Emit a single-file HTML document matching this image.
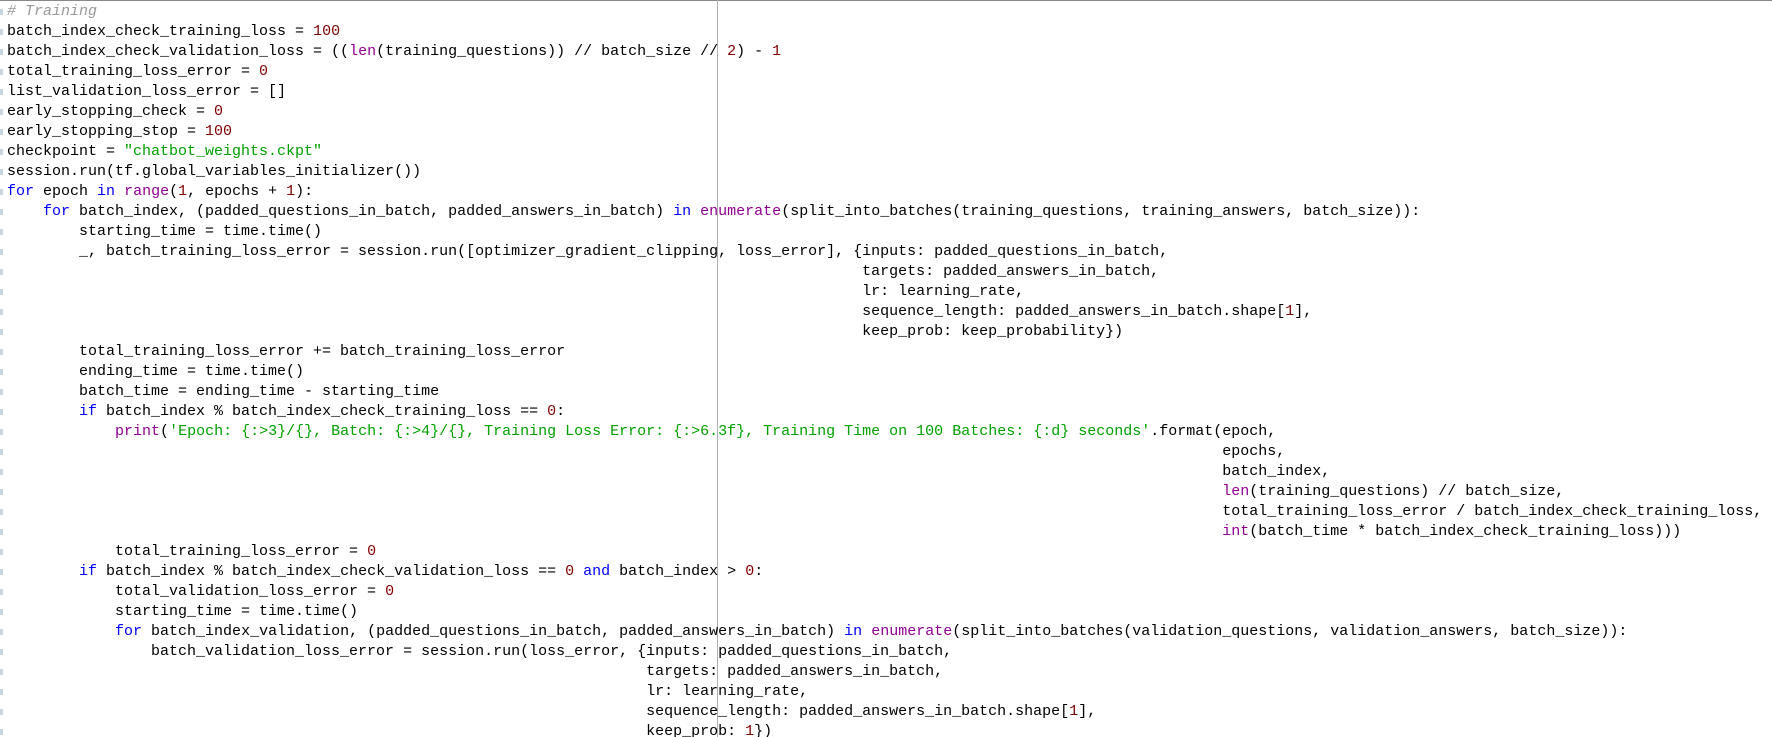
<!DOCTYPE html>
<html><head><meta charset="utf-8"><style>
html,body{margin:0;padding:0;background:#fff;width:1772px;height:737px;overflow:hidden;position:relative}
.top{position:absolute;left:0;top:0;width:1772px;height:1px;background:#8a8a8a}
.vl{position:absolute;left:717px;top:0;width:1px;height:737px;background:#b0b0b0}
.gut{position:absolute;left:0;top:1px;width:3px;height:736px;background:repeating-linear-gradient(#fff 0 8px,#c8d4e0 8px 14px,#fff 14px 20px)}
pre{position:absolute;left:7px;top:2px;margin:0;font-family:"Liberation Mono",monospace;font-size:15px;line-height:20px;color:#000;white-space:pre}
.c{color:#999;font-style:italic}.k{color:#0000ff}.b{color:#900090}.n{color:#800000}.s{color:#00a000}
</style></head><body>
<div class="top"></div><div class="gut"></div><div class="vl"></div>
<pre><span class="c"># Training</span>
batch_index_check_training_loss = <span class="n">100</span>
batch_index_check_validation_loss = ((<span class="b">len</span>(training_questions)) // batch_size // <span class="n">2</span>) - <span class="n">1</span>
total_training_loss_error = <span class="n">0</span>
list_validation_loss_error = []
early_stopping_check = <span class="n">0</span>
early_stopping_stop = <span class="n">100</span>
checkpoint = <span class="s">"chatbot_weights.ckpt"</span>
session.run(tf.global_variables_initializer())
<span class="k">for</span> epoch <span class="k">in</span> <span class="b">range</span>(<span class="n">1</span>, epochs + <span class="n">1</span>):
    <span class="k">for</span> batch_index, (padded_questions_in_batch, padded_answers_in_batch) <span class="k">in</span> <span class="b">enumerate</span>(split_into_batches(training_questions, training_answers, batch_size)):
        starting_time = time.time()
        _, batch_training_loss_error = session.run([optimizer_gradient_clipping, loss_error], {inputs: padded_questions_in_batch,
                                                                                               targets: padded_answers_in_batch,
                                                                                               lr: learning_rate,
                                                                                               sequence_length: padded_answers_in_batch.shape[<span class="n">1</span>],
                                                                                               keep_prob: keep_probability})
        total_training_loss_error += batch_training_loss_error
        ending_time = time.time()
        batch_time = ending_time - starting_time
        <span class="k">if</span> batch_index % batch_index_check_training_loss == <span class="n">0</span>:
            <span class="b">print</span>(<span class="s">'Epoch: {:&gt;3}/{}, Batch: {:&gt;4}/{}, Training Loss Error: {:&gt;6.3f}, Training Time on 100 Batches: {:d} seconds'</span>.format(epoch,
                                                                                                                                       epochs,
                                                                                                                                       batch_index,
                                                                                                                                       <span class="b">len</span>(training_questions) // batch_size,
                                                                                                                                       total_training_loss_error / batch_index_check_training_loss,
                                                                                                                                       <span class="b">int</span>(batch_time * batch_index_check_training_loss)))
            total_training_loss_error = <span class="n">0</span>
        <span class="k">if</span> batch_index % batch_index_check_validation_loss == <span class="n">0</span> <span class="k">and</span> batch_index &gt; <span class="n">0</span>:
            total_validation_loss_error = <span class="n">0</span>
            starting_time = time.time()
            <span class="k">for</span> batch_index_validation, (padded_questions_in_batch, padded_answers_in_batch) <span class="k">in</span> <span class="b">enumerate</span>(split_into_batches(validation_questions, validation_answers, batch_size)):
                batch_validation_loss_error = session.run(loss_error, {inputs: padded_questions_in_batch,
                                                                       targets: padded_answers_in_batch,
                                                                       lr: learning_rate,
                                                                       sequence_length: padded_answers_in_batch.shape[<span class="n">1</span>],
                                                                       keep_prob: <span class="n">1</span>})
</pre>
</body></html>
